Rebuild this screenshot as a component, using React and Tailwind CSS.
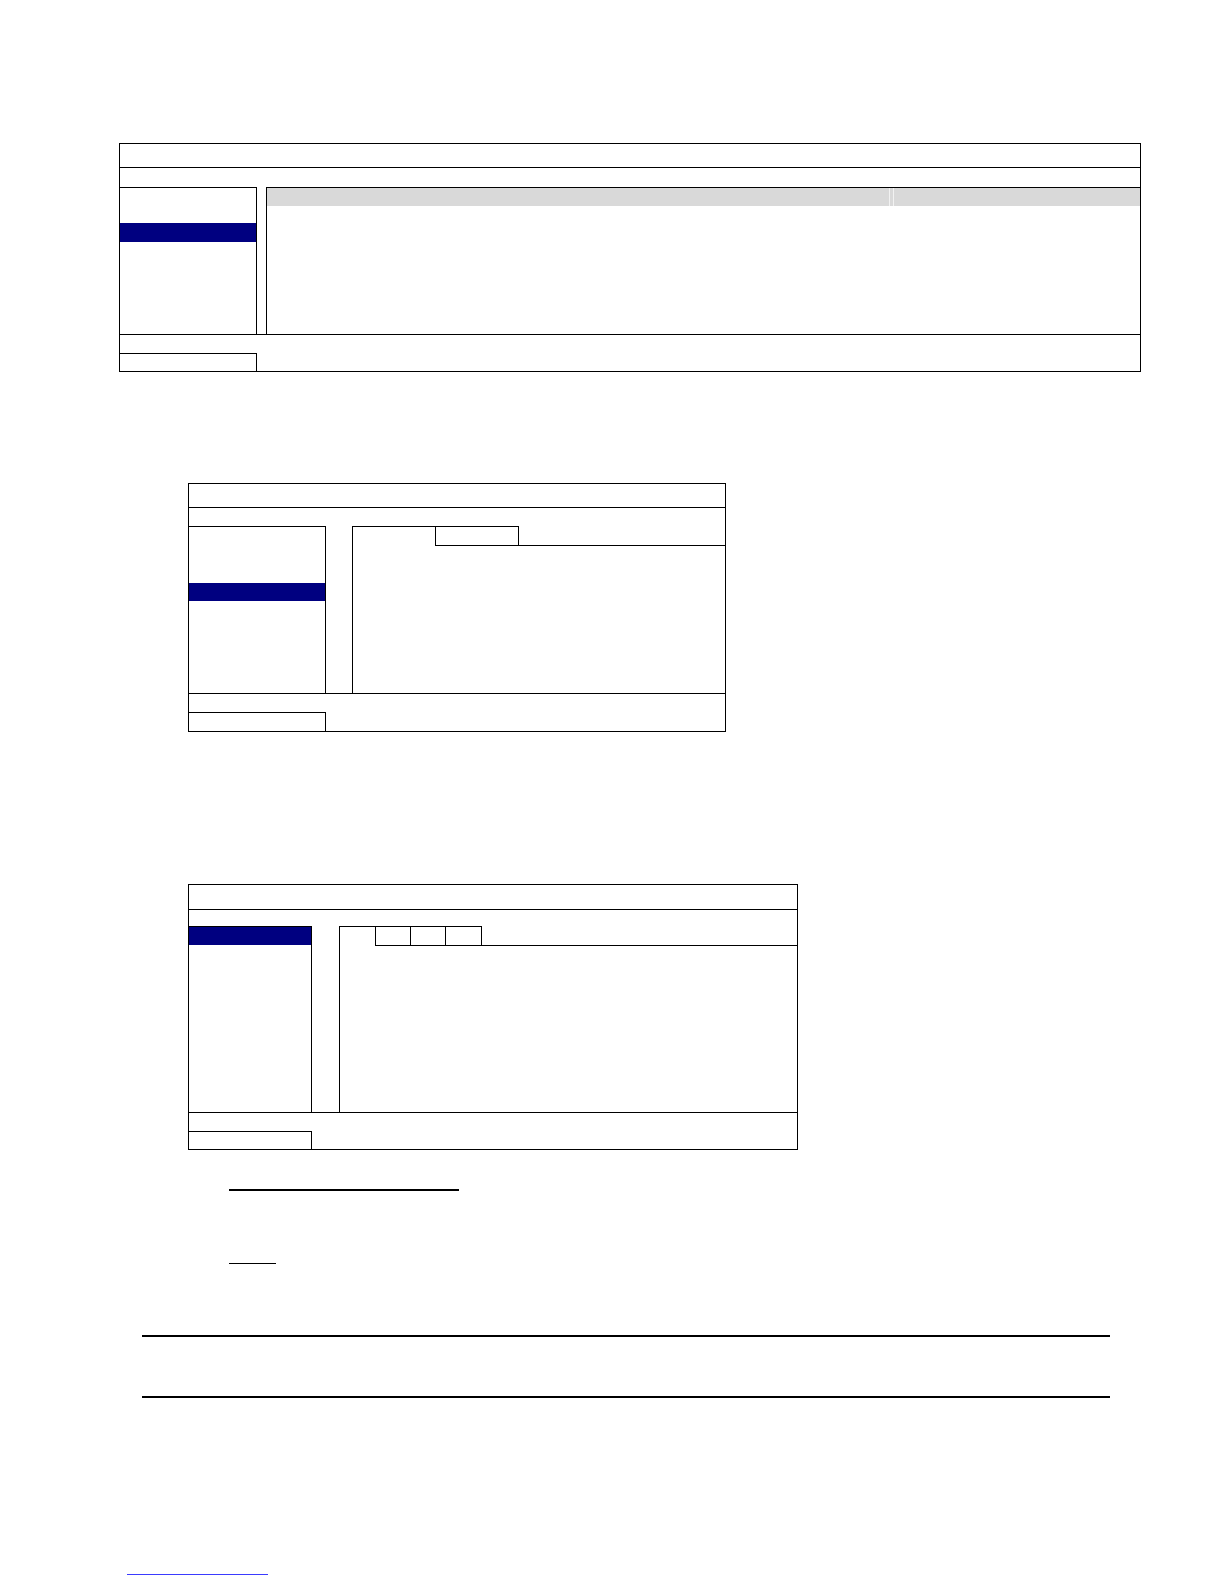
// first diagram: list on the left, table with grey header on the right
function TableDiagram() {
  return (
    <div className="ml-[119px] w-[1022px] border border-black flex flex-col">
      <div className="h-[24px] border-b border-black" />
      <div className="h-[19px]" />
      <div className="h-[148px] flex border-b border-black">
        <div className="w-[137px] border-t border-r border-black pt-[35px]">
          <div className="h-[19px] bg-[#000080]" />
        </div>
        <div className="w-[9px]" />
        <div className="flex-1 border-t border-l border-black">
          <div className="h-[18px] flex bg-[#d9d9d9]">
            <div className="w-[622px]" />
            <div className="w-[5px] border-x border-[#f2f2f2]" />
            <div className="flex-1" />
          </div>
        </div>
      </div>
      <div className="h-[18px]" />
      <div className="w-[137px] h-[18px] border-t border-r border-black" />
    </div>
  );
}

function TabsDiagram() {
  return (
    <div className="mt-[111px] ml-[188px] w-[538px] border border-black flex flex-col">
      <div className="h-[24px] border-b border-black" />
      <div className="h-[18px]" />
      <div className="h-[168px] flex border-b border-black">
        <div className="w-[137px] border-t border-r border-black pt-[56px]">
          <div className="h-[18px] bg-[#000080]" />
        </div>
        <div className="w-[26px]" />
        <div className="flex-1 border-l border-black">
          <div className="h-[20px] flex">
            <div className="w-[82px] border-t border-black" />
            <div className="w-[84px] border border-black" />
            <div className="flex-1 border-b border-black" />
          </div>
        </div>
      </div>
      <div className="h-[18px]" />
      <div className="w-[137px] h-[19px] border-t border-r border-black" />
    </div>
  );
}

function ThreeTabsDiagram() {
  return (
    <div className="mt-[152px] ml-[188px] w-[610px] border border-black flex flex-col">
      <div className="h-[25px] border-b border-black" />
      <div className="h-[16px]" />
      <div className="h-[187px] flex border-b border-black">
        <div className="w-[123px] border-t border-r border-black">
          <div className="h-[18px] bg-[#000080]" />
        </div>
        <div className="w-[27px]" />
        <div className="flex-1 border-l border-black">
          <div className="h-[20px] flex">
            <div className="w-[35px] border-t border-black" />
            <div className="w-[35px] border-t border-l border-b border-black" />
            <div className="w-[35px] border-t border-l border-b border-black" />
            <div className="w-[37px] border border-black" />
            <div className="flex-1 border-b border-black" />
          </div>
        </div>
      </div>
      <div className="h-[18px]" />
      <div className="w-[123px] h-[18px] border-t border-r border-black" />
    </div>
  );
}

export default function App() {
  return (
    <div className="w-[1224px] min-h-[1584px] bg-white pt-[143px] flex flex-col font-['Liberation_Sans',sans-serif]">
      <TableDiagram />
      <TabsDiagram />
      <ThreeTabsDiagram />

      <div className="mt-[39px] ml-[229px] w-[230px] h-[1.5px] bg-black" />
      <div className="mt-[72px] ml-[229px] w-[47px] h-[1.5px] bg-black" />

      <div className="mt-[71px] ml-[142px] w-[968px] h-[2px] bg-black" />
      <div className="mt-[59px] ml-[142px] w-[968px] h-[2px] bg-black" />

      <div className="mt-[176px] ml-[127px] w-[141px] h-px bg-[#3b3bff]" />
    </div>
  );
}
